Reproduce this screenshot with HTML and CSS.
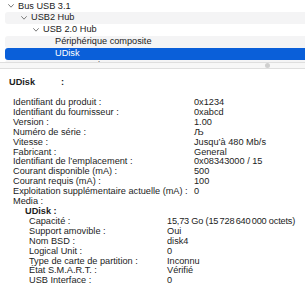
FILE: index.html
```html
<!DOCTYPE html>
<html lang="fr">
<head>
  <meta charset="UTF-8">
  <title>Informations système – USB</title>
  <link rel="stylesheet" href="styles.css">
</head>
<body>
  <div class="tree">
    <div class="row lvl0"><svg class="chev" viewBox="0 0 6 4"><path d="M0.6 0.6 L3 3.2 L5.4 0.6"/></svg>Bus USB 3.1</div>
    <div class="row alt lvl1"><svg class="chev" viewBox="0 0 6 4"><path d="M0.6 0.6 L3 3.2 L5.4 0.6"/></svg>USB2 Hub</div>
    <div class="row lvl2"><svg class="chev" viewBox="0 0 6 4"><path d="M0.6 0.6 L3 3.2 L5.4 0.6"/></svg>USB 2.0 Hub</div>
    <div class="row alt lvl3">Périphérique composite</div>
    <div class="row selected lvl3">UDisk</div>
    <div class="row alt lvl3">USB Receiver</div>
  </div>
  <div class="divider"><span class="dimple"></span></div>

  <div class="details">
    <div class="title"><span class="title-name">UDisk</span>:</div>

    <div class="prop"><span class="k">Identifiant du produit :</span><span class="v">0x1234</span></div>
    <div class="prop"><span class="k">Identifiant du fournisseur :</span><span class="v">0xabcd</span></div>
    <div class="prop"><span class="k">Version :</span><span class="v">1.00</span></div>
    <div class="prop"><span class="k">Numéro de série :</span><span class="v">Љ</span></div>
    <div class="prop"><span class="k">Vitesse :</span><span class="v">Jusqu’à 480 Mb/s</span></div>
    <div class="prop"><span class="k">Fabricant :</span><span class="v">General</span></div>
    <div class="prop"><span class="k">Identifiant de l’emplacement :</span><span class="v">0x08343000 / 15</span></div>
    <div class="prop"><span class="k">Courant disponible (mA) :</span><span class="v">500</span></div>
    <div class="prop"><span class="k">Courant requis (mA) :</span><span class="v">100</span></div>
    <div class="prop"><span class="k">Exploitation supplémentaire actuelle (mA) :</span><span class="v">0</span></div>
    <div class="prop"><span class="k">Media :</span></div>

    <div class="media">
      <div class="media-title">UDisk :</div>
      <div class="sub">
        <div class="prop"><span class="k">Capacité :</span><span class="v size">15,73 Go (<span class="num">15 728 640 000</span> octets)</span></div>
        <div class="prop"><span class="k">Support amovible :</span><span class="v">Oui</span></div>
        <div class="prop"><span class="k">Nom BSD :</span><span class="v">disk4</span></div>
        <div class="prop"><span class="k">Logical Unit :</span><span class="v">0</span></div>
        <div class="prop"><span class="k">Type de carte de partition :</span><span class="v">Inconnu</span></div>
        <div class="prop"><span class="k">État S.M.A.R.T. :</span><span class="v">Vérifié</span></div>
        <div class="prop"><span class="k">USB Interface :</span><span class="v">0</span></div>
      </div>
    </div>
  </div>
</body>
</html>
```

FILE: styles.css
```css
body {
  margin: 0;
  width: 305px;
  height: 300px;
  overflow: hidden;
  background: #fff;
  font-family: "Liberation Sans", Arial, sans-serif;
  font-size: 9.2px;
  color: #1c1c1c;
}

/* Liste en haut */
.tree {
  height: 63px;
  padding-top: 0.6px;
  box-sizing: border-box;
  overflow: hidden;
  border-bottom: 1px solid #dedede;
}
.row {
  height: 11.8px;
  line-height: 11.8px;
  margin-left: 5px;
  margin-right: -5px;
  border-radius: 3px;
  display: flex;
  align-items: center;
  white-space: nowrap;
}
.row.alt {
  background: #f4f4f5;
}
.row.selected {
  background: #0a5fd9;
  color: #fff;
}
.lvl0 { padding-left: 3px; }
.lvl1 { padding-left: 16px; }
.lvl2 { padding-left: 28px; }
.lvl3 { padding-left: 50px; }
.chev {
  width: 6px;
  height: 4px;
  margin-right: 4px;
  fill: none;
  stroke: #7a7a7a;
  stroke-width: 1;
  stroke-linecap: round;
  stroke-linejoin: round;
}

/* Séparateur */
.divider {
  height: 5px;
  background: #f7f7f7;
  border-bottom: 1px solid #dedede;
  display: flex;
  align-items: center;
  padding-left: 265px;
}
.dimple {
  width: 5px;
  height: 5px;
  border-radius: 50%;
  background: #cfcfcf;
}

/* Détails */
.details {
  padding: 9px 0 0 9px;
  line-height: 9.9px;
}
.title {
  font-weight: bold;
  display: flex;
  margin-bottom: 10.1px;
}
.title-name {
  width: 52px;
}
.prop {
  display: flex;
  padding-left: 4px;
  white-space: nowrap;
}
.prop .k {
  width: 181px;
  flex-shrink: 0;
}
.media-title {
  font-weight: bold;
  padding-left: 16px;
}
.sub {
  padding-left: 16px;
}
.sub .prop .k {
  width: 138px;
}
.size {
  letter-spacing: -0.2px;
}
.size .num {
  word-spacing: -1px;
}
```
